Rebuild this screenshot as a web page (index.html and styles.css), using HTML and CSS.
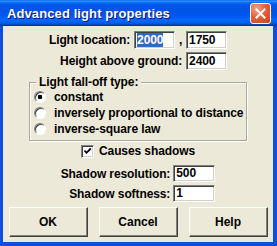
FILE: index.html
```html
<!DOCTYPE html>
<html lang="en">
<head>
    <meta charset="UTF-8">
    <title>Advanced light properties</title>
    <link rel="stylesheet" href="styles.css">
</head>
<body>
    <div class="window">
        <div class="titlebar">
            <span class="title">Advanced light properties</span>
            <span class="close">
                <svg width="11" height="11" viewBox="0 0 11 11">
                    <path d="M1.5 1.5 L9.5 9.5 M9.5 1.5 L1.5 9.5" stroke="#fff" stroke-width="2" stroke-linecap="square"/>
                </svg>
            </span>
        </div>

        <div class="dialog">
            <div class="location-grid">
                <span class="lbl">Light location:</span>
                <div class="field"><span class="sel">2000</span></div>
                <span class="comma">,</span>
                <div class="field">1750</div>
                <span class="lbl wide">Height above ground:</span>
                <div class="field">2400</div>
            </div>

            <fieldset class="group">
                <legend>Light fall-off type:</legend>
                <div class="option"><span class="radio checked"></span>constant</div>
                <div class="option"><span class="radio"></span>inversely proportional to distance</div>
                <div class="option"><span class="radio"></span>inverse-square law</div>
            </fieldset>

            <div class="check-row">
                <span class="checkbox">
                    <svg width="9" height="9" viewBox="0 0 9 9">
                        <path d="M1.5 3.5 L3.5 5.8 L7.8 1.5" fill="none" stroke="#000" stroke-width="1.8"/>
                    </svg>
                </span>
                Causes shadows
            </div>

            <div class="shadow-grid">
                <span class="lbl">Shadow resolution:</span>
                <div class="field small">500</div>
                <span class="lbl">Shadow softness:</span>
                <div class="field small">1</div>
            </div>

            <div class="buttons">
                <button>OK</button>
                <button>Cancel</button>
                <button>Help</button>
            </div>
        </div>
    </div>
</body>
</html>
```

FILE: styles.css
```css
* {
    margin: 0;
    padding: 0;
    box-sizing: border-box;
}

html, body {
    width: 277px;
    height: 246px;
    overflow: hidden;
}

body {
    font-family: "Liberation Sans", Arial, sans-serif;
    font-weight: bold;
    font-size: 12px;
    letter-spacing: -0.1px;
    color: #000;
}

.window {
    width: 277px;
    height: 246px;
    background-color: #0b4fdc;
    display: flex;
    flex-direction: column;
}

/* title bar */
.titlebar {
    height: 26px;
    display: flex;
    align-items: center;
    justify-content: space-between;
    padding: 0 6px 0 7px;
    background: linear-gradient(180deg, #0058ee 0%, #3a93ff 4%, #288eff 6%, #127dff 8%, #036ffc 10%, #0262ee 14%, #0057e5 20%, #0054e3 24%, #0055eb 56%, #005bf5 66%, #026afe 76%, #0062ef 86%, #0052d6 92%, #0040ab 96%, #003092 100%);
}

.title {
    color: #fff;
    font-size: 13px;
    letter-spacing: 0.1px;
    text-shadow: 1px 1px #0f1089;
}

.close {
    width: 21px;
    height: 21px;
    border: 1px solid #fff;
    border-radius: 3px;
    background: radial-gradient(circle at 30% 25%, #f0a58a 0%, #e2603a 45%, #c8401c 100%);
    display: flex;
    align-items: center;
    justify-content: center;
}

/* dialog body */
.dialog {
    flex: 1;
    margin: 0 4px 4px 3px;
    background-color: #ece9d8;
    padding: 5px 0;
    display: flex;
    flex-direction: column;
}

.field {
    height: 18px;
    background-color: #fff;
    border: 1px solid;
    border-color: #808080 #fff #fff #808080;
    box-shadow: inset 1px 1px #404040, inset -1px -1px #d4d0c8;
    padding: 0 2px;
    line-height: 16px;
    white-space: nowrap;
}

.field.small {
    height: 17px;
    line-height: 15px;
}

.sel {
    background-color: #316ac5;
    color: #fff;
}

.lbl {
    text-align: right;
    padding-right: 4px;
    white-space: nowrap;
}

.location-grid {
    display: grid;
    grid-template-columns: auto 41px 11px 41px;
    row-gap: 3px;
    align-items: center;
    margin: 0 auto;
}

.location-grid .wide {
    grid-column: 1 / 4;
}

.comma {
    text-align: center;
}

/* radio group */
.group {
    width: 218px;
    margin: 5px auto 0;
    border: 1px solid #aca899;
    box-shadow: inset 1px 1px #fff, 1px 1px #fff;
    padding: 0 0 3px 4px;
}

.group legend {
    line-height: 14px;
    padding: 0 3px;
    margin-left: 2px;
    background-color: #ece9d8;
}

.option {
    display: flex;
    align-items: center;
    height: 16px;
    white-space: nowrap;
}

.radio {
    width: 12px;
    height: 12px;
    border-radius: 50%;
    margin-right: 8px;
    border: 1px solid;
    border-color: #808080 #fff #fff #808080;
    box-shadow: inset 1px 1px #404040;
    background: #fff;
}

.radio.checked {
    background: radial-gradient(circle, #000 0 2px, #fff 2.6px);
}

/* checkbox */
.check-row {
    display: flex;
    align-items: center;
    justify-content: center;
    height: 16px;
    margin-top: 2px;
}

.checkbox {
    width: 13px;
    height: 13px;
    margin-right: 5px;
    background-color: #fff;
    border: 1px solid;
    border-color: #808080 #fff #fff #808080;
    box-shadow: inset 1px 1px #404040, inset -1px -1px #d4d0c8;
    display: flex;
    align-items: center;
    justify-content: center;
}

.shadow-grid {
    display: grid;
    grid-template-columns: auto 42px;
    row-gap: 3px;
    align-items: center;
    margin: 6px auto 0;
}

.shadow-grid .lbl {
    padding-right: 3px;
}

/* buttons */
.buttons {
    display: flex;
    justify-content: center;
    gap: 11px;
    margin-top: 5px;
}

.buttons button {
    width: 79px;
    height: 30px;
    font: inherit;
    color: #000;
    background-color: #ece9d8;
    border: 1px solid;
    border-color: #fff #404040 #404040 #fff;
    box-shadow: inset -1px -1px #808080;
}
```
